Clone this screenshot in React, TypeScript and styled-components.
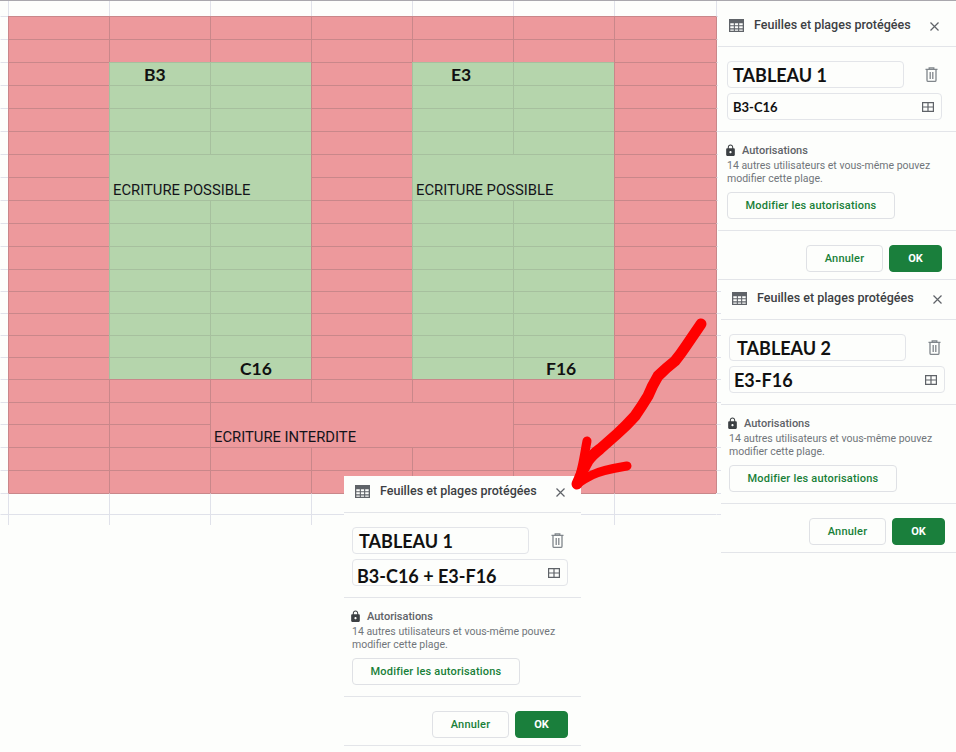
import React from 'react'
import styled, { createGlobalStyle } from 'styled-components'

const GlobalStyle = createGlobalStyle`
  html, body {
    margin: 0;
    background: #fdfefc;
    overflow: hidden;
  }
  * {
    box-sizing: border-box;
  }
`

type Tone = 'red' | 'green' | 'edge' | 'blank'

const fills: Record<Tone, string> = {
  red: '#ed999c',
  green: '#b5d5ac',
  edge: 'transparent',
  blank: 'transparent',
}
const leftLines: Record<Tone, string> = {
  red: '#c9878a',
  green: '#a6c09e',
  edge: '#e0e2ea',
  blank: '#e0e2ea',
}
const topLines: Record<Tone, string> = {
  red: '#c9878a',
  green: '#a6c09e',
  edge: '#c9878a',
  blank: '#e0e2ea',
}

const Page = styled.div`
  position: relative;
  width: 956px;
  height: 752px;
  border-top: 1px solid #a9a7ad;
  display: flex;
  align-items: flex-start;
  overflow: hidden;
`

const Sheet = styled.div<{ $rows: string }>`
  flex: 0 0 721px;
  display: grid;
  grid-template-columns: 8px repeat(6, 101px) 102px 5px;
  grid-template-rows: ${({ $rows }) => $rows};
`

const Cell = styled.div<{ $tone: Tone; $cols?: number; $rows?: number; $indent?: number }>`
  grid-column: span ${({ $cols }) => $cols ?? 1};
  grid-row: span ${({ $rows }) => $rows ?? 1};
  min-width: 0;
  background: ${({ $tone }) => fills[$tone]};
  border-left: 1px solid ${({ $tone }) => leftLines[$tone]};
  border-top: 1px solid ${({ $tone }) => topLines[$tone]};
  padding-left: ${({ $indent }) => $indent ?? 0}px;
  display: flex;
  align-items: center;
`

const Gutter = styled.div<{ $edge?: boolean }>`
  border-top: 1px solid #e0e2ea;
  border-left: 1px solid ${({ $edge }) => ($edge ? '#c9878a' : 'transparent')};
`

const HeadTick = styled.div`
  border-left: 1px solid #e0e2ea;
`

const MergedCell = styled(Cell)`
  align-items: flex-end;
  padding: 0 0 0 3px;
`

const Note = styled.span`
  font-family: Roboto, 'Liberation Sans', sans-serif;
  font-size: 14.8px;
  line-height: 20px;
  color: #14141a;
  white-space: nowrap;
`

const CellLabel = styled.span`
  font-family: Lato, 'Open Sans', sans-serif;
  font-weight: 700;
  font-size: 17.5px;
  color: #111;
  white-space: nowrap;
`

const Side = styled.div`
  flex: 1;
  min-width: 0;
  display: flex;
  flex-direction: column;
`

const Panel = styled.section<{ $shift?: number; $inset?: number; $trail?: number }>`
  margin-left: ${({ $shift }) => $shift ?? 0}px;
  background: #fdfefc;
  position: relative;
  --inset: ${({ $inset }) => $inset ?? 8}px;
  --trail: ${({ $trail }) => $trail ?? 14}px;
`

const FloatingPanel = styled(Panel)`
  position: absolute;
  left: 344px;
  top: 475px;
  width: 237px;
  z-index: 2;
`

const PanelHeader = styled.header<{ $height: number }>`
  height: ${({ $height }) => $height}px;
  display: flex;
  align-items: flex-end;
  gap: 10px;
  padding: 0 calc(var(--trail) + 3px) 12px 11px;
  border-bottom: 1px solid #e3e5e9;
`

const Title = styled.h2`
  flex: 1;
  margin: 0;
  font-family: Roboto, 'Liberation Sans', sans-serif;
  font-size: 12.5px;
  font-weight: 500;
  line-height: 18px;
  color: #3c4043;
  white-space: nowrap;
`

const HeaderIcon = styled.svg`
  display: block;
  margin-bottom: 2px;
`

const RangeForm = styled.div`
  padding: 14px var(--trail) 11px var(--inset);
  border-bottom: 1px solid #e3e5e9;
  display: flex;
  flex-direction: column;
  gap: 5px;
`

const NameRow = styled.div`
  display: flex;
  align-items: center;
  justify-content: space-between;
  padding-right: 4px;
`

const Field = styled.div<{ $wide?: boolean }>`
  height: 27px;
  border: 1px solid #e3e5e9;
  border-radius: 4px;
  background: #fdfefc;
  display: flex;
  align-items: center;
  justify-content: space-between;
  width: ${({ $wide }) => ($wide ? '100%' : '177px')};
  flex: none;
`

const NameText = styled.span<{ $indent: number }>`
  font-family: Lato, 'Open Sans', sans-serif;
  font-weight: 700;
  font-size: 18px;
  color: #111;
  padding-left: ${({ $indent }) => $indent}px;
  white-space: nowrap;
`

const RangeText = styled.span<{ $big?: boolean; $drop?: number }>`
  font-family: Lato, 'Open Sans', sans-serif;
  font-weight: 700;
  font-size: ${({ $big }) => ($big ? 18 : 13)}px;
  color: #111;
  padding: ${({ $drop }) => $drop ?? 0}px 0 0 ${({ $big }) => ($big ? 4 : 5)}px;
  white-space: nowrap;
`

const RangeGlyph = styled.svg`
  display: block;
  margin-right: 7px;
`

const Permissions = styled.div`
  padding: 11px var(--trail) 11px var(--inset);
  border-bottom: 1px solid #e3e5e9;
`

const PermissionHead = styled.div`
  display: flex;
  align-items: center;
  gap: 5px;
  margin-left: -3px;
  height: 14px;
  font-family: Roboto, 'Liberation Sans', sans-serif;
  font-size: 11px;
  font-weight: 500;
  color: #5f6368;
`

const PermissionText = styled.p`
  margin: 2px 0 7px;
  font-family: Roboto, 'Liberation Sans', sans-serif;
  font-size: 10.5px;
  line-height: 13px;
  color: #70757a;
  white-space: nowrap;
`

const OutlineButton = styled.button<{ $width: number }>`
  display: block;
  width: ${({ $width }) => $width}px;
  height: 27px;
  padding: 0;
  background: #fdfefc;
  border: 1px solid #dfe1e5;
  border-radius: 4px;
  font-family: Roboto, 'Liberation Sans', sans-serif;
  font-size: 11px;
  font-weight: 500;
  letter-spacing: 0.2px;
  color: #188038;
`

const Footer = styled.footer`
  display: flex;
  justify-content: flex-end;
  gap: 6px;
  padding: 14px var(--trail) 7px var(--inset);
  border-bottom: 1px solid #e3e5e9;
`

const OkButton = styled.button`
  width: 53px;
  height: 27px;
  padding: 0;
  background: #1a7f3c;
  border: 1px solid #1a7f3c;
  border-radius: 4px;
  font-family: Roboto, 'Liberation Sans', sans-serif;
  font-size: 11px;
  font-weight: 700;
  color: #fff;
`

const Arrow = styled.svg`
  position: absolute;
  left: 0;
  top: 0;
  z-index: 3;
  pointer-events: none;
`

const TableIcon = () => (
  <HeaderIcon width="15" height="13" viewBox="0 0 15 13">
    <path
      fill="#5f6368"
      fillRule="evenodd"
      d="M0 0h15v13H0zM1.3 4.2h3.5v2H1.3zM5.9 4.2h3.2v2H5.9zM10.2 4.2h3.5v2h-3.5zM1.3 7.3h3.5v2H1.3zM5.9 7.3h3.2v2H5.9zM10.2 7.3h3.5v2h-3.5zM1.3 10.4h3.5v1.4H1.3zM5.9 10.4h3.2v1.4H5.9zM10.2 10.4h3.5v1.4h-3.5z"
    />
  </HeaderIcon>
)

const CloseIcon = () => (
  <HeaderIcon width="9" height="9" viewBox="0 0 9 9" style={{ marginBottom: 3 }}>
    <path d="M.5.5l8 8M8.5.5l-8 8" stroke="#5f6368" strokeWidth="1.2" fill="none" />
  </HeaderIcon>
)

const TrashIcon = () => (
  <svg width="13" height="15" viewBox="0 0 13 15" style={{ display: 'block' }}>
    <path
      d="M.5 2.4h12M4.2 2V.9h4.6V2M2 2.6v10.6c0 .7.5 1.2 1.2 1.2h6.6c.7 0 1.2-.5 1.2-1.2V2.6M5.2 5v7M7.8 5v7"
      stroke="#80868b"
      strokeWidth="1.3"
      fill="none"
    />
  </svg>
)

const GridIcon = () => (
  <RangeGlyph width="12" height="10" viewBox="0 0 12 10">
    <path d="M.6.6h10.8v8.8H.6zM6 .6v8.8M.6 5h10.8" stroke="#5f6368" strokeWidth="1.2" fill="none" />
  </RangeGlyph>
)

const LockIcon = () => (
  <svg width="13" height="13" viewBox="0 0 24 24" style={{ display: 'block', flex: 'none' }}>
    <path
      fill="#3c4043"
      d="M18 8h-1V6c0-2.76-2.24-5-5-5S7 3.24 7 6v2H6c-1.1 0-2 .9-2 2v10c0 1.1.9 2 2 2h12c1.1 0 2-.9 2-2V10c0-1.1-.9-2-2-2zm-6 9c-1.1 0-2-.9-2-2s.9-2 2-2 2 .9 2 2-.9 2-2 2zm3.1-9H8.9V6c0-1.71 1.39-3.1 3.1-3.1 1.71 0 3.1 1.39 3.1 3.1v2z"
    />
  </svg>
)

type RangePanelProps = {
  name: string
  nameIndent: number
  range: string
  headerHeight: number
  bigRange?: boolean
  rangeDrop?: number
}

const PanelBody = ({ name, nameIndent, range, headerHeight, bigRange, rangeDrop }: RangePanelProps) => (
  <>
    <PanelHeader $height={headerHeight}>
      <TableIcon />
      <Title>Feuilles et plages protégées</Title>
      <CloseIcon />
    </PanelHeader>
    <RangeForm>
      <NameRow>
        <Field>
          <NameText $indent={nameIndent}>{name}</NameText>
        </Field>
        <TrashIcon />
      </NameRow>
      <Field $wide>
        <RangeText $big={bigRange} $drop={rangeDrop}>
          {range}
        </RangeText>
        <GridIcon />
      </Field>
    </RangeForm>
    <Permissions>
      <PermissionHead>
        <LockIcon />
        Autorisations
      </PermissionHead>
      <PermissionText>
        14 autres utilisateurs et vous-même pouvez
        <br />
        modifier cette plage.
      </PermissionText>
      <OutlineButton $width={168}>Modifier les autorisations</OutlineButton>
    </Permissions>
    <Footer>
      <OutlineButton $width={77}>Annuler</OutlineButton>
      <OkButton>OK</OkButton>
    </Footer>
  </>
)

const rowHeights = [23, 23, 23, 23, 23, 23, 23, 23, 23, 23, 23, 22, 22, 22, 22, 22, 23, 22, 23, 23, 23, 21, 11]

const merges = [
  { col: 2, row: 7, cols: 2, rows: 2, text: 'ECRITURE POSSIBLE' },
  { col: 5, row: 7, cols: 2, rows: 2, text: 'ECRITURE POSSIBLE' },
  { col: 3, row: 18, cols: 3, rows: 2, text: 'ECRITURE INTERDITE' },
]

const labels: Record<string, { text: string; indent: number }> = {
  '2:3': { text: 'B3', indent: 34 },
  '3:16': { text: 'C16', indent: 29 },
  '5:3': { text: 'E3', indent: 38 },
  '6:16': { text: 'F16', indent: 32 },
}

const toneAt = (col: number, row: number): Tone => {
  if (row >= 3 && row <= 16 && [2, 3, 5, 6].includes(col)) return 'green'
  if (row <= 21) return 'red'
  return row === 22 ? 'edge' : 'blank'
}

const covered = (col: number, row: number) =>
  merges.some((m) => col >= m.col && col < m.col + m.cols && row >= m.row && row < m.row + m.rows)

const SheetGrid = () => (
  <Sheet $rows={`15px ${rowHeights.map((h) => `${h}px`).join(' ')}`}>
    <div />
    {Array.from({ length: 7 }, (_, i) => (
      <HeadTick key={i} />
    ))}
    <HeadTick />
    {rowHeights.map((_, r) => {
      const row = r + 1
      const cells: React.ReactNode[] = [<Gutter key="left" />]
      for (let col = 1; col <= 7; col++) {
        const merge = merges.find((m) => m.col === col && m.row === row)
        const tone = toneAt(col, row)
        if (merge) {
          cells.push(
            <MergedCell key={col} $tone={tone} $cols={merge.cols} $rows={merge.rows}>
              <Note>{merge.text}</Note>
            </MergedCell>
          )
        } else if (!covered(col, row)) {
          const label = labels[`${col}:${row}`]
          cells.push(
            <Cell key={col} $tone={tone} $indent={label?.indent}>
              {label && <CellLabel>{label.text}</CellLabel>}
            </Cell>
          )
        }
      }
      cells.push(<Gutter key="right" $edge={row <= 21} />)
      return <React.Fragment key={row}>{cells}</React.Fragment>
    })}
  </Sheet>
)

export default function App() {
  return (
    <>
      <GlobalStyle />
      <Page>
        <SheetGrid />
        <Side>
          <Panel $shift={-3} $inset={9} $trail={14}>
            <PanelBody name="TABLEAU 1" nameIndent={5} range="B3-C16" headerHeight={46} />
          </Panel>
          <Panel $trail={11}>
            <PanelBody name="TABLEAU 2" nameIndent={7} range="E3-F16" headerHeight={40} bigRange />
          </Panel>
        </Side>
        <FloatingPanel $trail={13}>
          <PanelBody name="TABLEAU 1" nameIndent={6} range="B3-C16 + E3-F16" headerHeight={37} bigRange rangeDrop={6} />
        </FloatingPanel>
        <Arrow width="956" height="752" viewBox="0 0 956 752">
          <g fill="none" stroke="#ff0000" strokeLinecap="round" strokeLinejoin="round">
            <path
              strokeWidth="11"
              d="M701 323L686 345Q680 354 675 360Q666 367 658 375Q652 385 648 395Q642 405 635 415Q626 425 617 433L600 448Q592 454 588 460Q582 470 577 483"
            />
            <path strokeWidth="9" d="M587 440C585 450 584 458 582 466C581 472 579 478 577 483" />
            <path strokeWidth="9" d="M627 465C615 467 602 469 592 474C586 477 581 480 577 483" />
          </g>
        </Arrow>
      </Page>
    </>
  )
}
